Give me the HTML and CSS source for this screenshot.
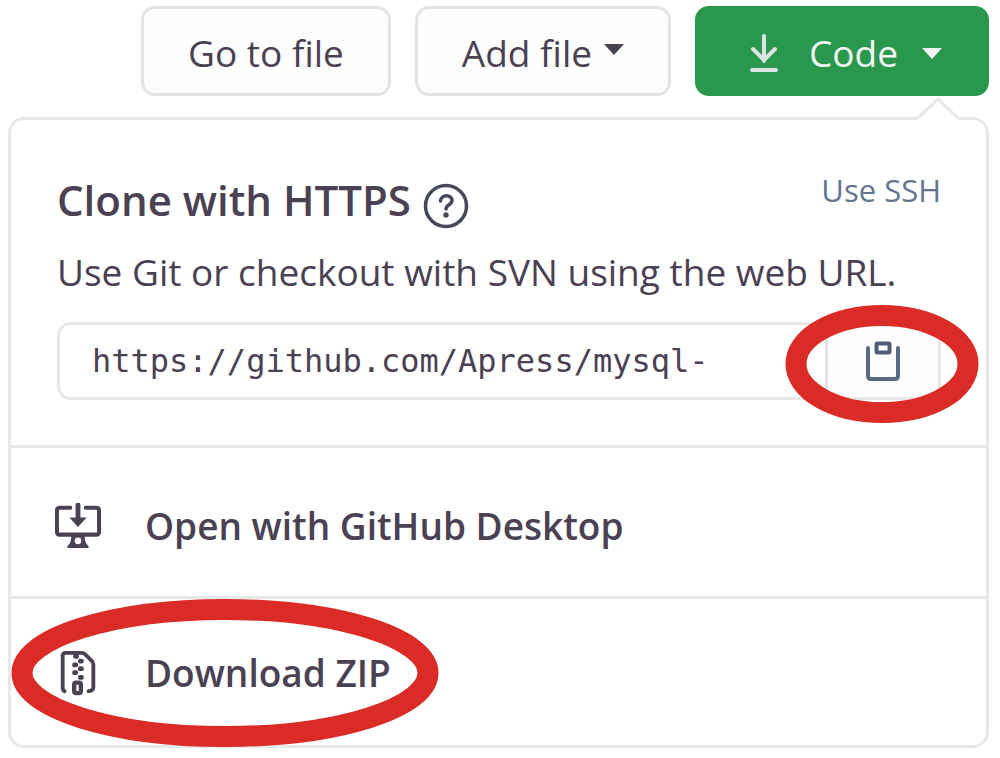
FILE: index.html
```html
<!DOCTYPE html>
<html lang="en">
<head>
<meta charset="utf-8">
<title>Clone repository</title>
<link rel="stylesheet" href="styles.css">
</head>
<body>
<nav class="toolbar">
  <button class="btn" type="button">Go to file</button>
  <button class="btn" type="button">Add file
    <svg class="caret caret-raised" viewBox="0 0 20 11" aria-hidden="true"><path d="M0 0h20L10 11z"/></svg>
  </button>
  <button class="btn btn-primary" type="button" aria-expanded="true">
    <svg class="download-icon" viewBox="0 0 28 38" aria-hidden="true"><path d="M14 2v25M3 15l11 11 11-11M2 36h24"/></svg>
    Code
    <svg class="caret caret-spaced" viewBox="0 0 20 11" aria-hidden="true"><path d="M0 0h20L10 11z"/></svg>
  </button>
</nav>
<main class="panel">
  <svg class="panel-tip" viewBox="0 0 42 22" aria-hidden="true"><path d="M0 22L21 2l21 20z" fill="#fff"/><path d="M1 20L21 1l20 19" fill="none" stroke="#e7e8e8" stroke-width="3"/></svg>
  <section class="clone">
    <div class="clone-head">
      <h1 class="title">Clone with HTTPS</h1>
      <a class="help" href="#help" aria-label="Which remote URL should I use?">
        <svg viewBox="0 0 46 46" aria-hidden="true"><circle cx="23" cy="23" r="20.5" fill="none" stroke="#46485c" stroke-width="3.5"/><path d="M17.500 18c.5-7 11.500-7 11.500-.5 0 4.500-6 4-6 8.500" fill="none" stroke="#46485c" stroke-width="3.500" stroke-linecap="round"/><circle cx="23" cy="32" r="2.700" fill="#46485c"/></svg>
      </a>
      <a class="ssh" href="#ssh">Use SSH</a>
    </div>
    <p class="hint"><label for="url">Use Git or checkout with SVN using the web URL.</label></p>
    <div class="url-group">
      <input class="url" id="url" type="text" readonly value="https://github.com/Apress/mysql-">
      <button class="copy" type="button" aria-label="Copy URL">
        <svg class="copy-icon" viewBox="0 0 36 42" aria-hidden="true"><path d="M3 8v28q0 3 3 3h24q3 0 3-3V8" fill="none" stroke="#5c6b85" stroke-width="4" stroke-linecap="round"/><rect x="11.500" y="3.500" width="13" height="9" rx="1" fill="#fff" stroke="#535c78" stroke-width="4"/></svg>
        <svg class="mark mark-copy" viewBox="0 0 194 118" aria-hidden="true"><ellipse cx="97" cy="59" rx="86" ry="48.500"/></svg>
      </button>
    </div>
  </section>
  <a class="row" href="#desktop">
    <svg class="row-icon" viewBox="0 0 48 48" aria-hidden="true"><path d="M16 5H5q-3 0-3 3v22q0 3 3 3h38q3 0 3-3V8q0-3-3-3H32" fill="none" stroke="#4a4153" stroke-width="4.200" stroke-linecap="round"/><path d="M24 2v16" stroke="#4a4153" stroke-width="5" stroke-linecap="round"/><path d="M15 15h18l-9 10z" fill="#4a4153"/><path d="M17 34h14c0 6 1 8 4 11v2H13v-2c3-3 4-5 4-11z" fill="#4a4153"/><ellipse cx="24" cy="39.500" rx="3.500" ry="3.500" fill="#fff"/></svg>
    Open with GitHub Desktop
  </a>
  <a class="row row-last" href="#zip">
    <svg class="row-icon" viewBox="0 0 48 48" aria-hidden="true"><path d="M10 43q-2-1-2-4V6q0-3 3-3h17q2 0 3.500 1.500L38 11q2 1.500 2 4v24q0 3-5 4" fill="none" stroke="#4a4153" stroke-width="4" stroke-linecap="round"/><g fill="#4a4153"><rect x="19" y="4" width="6" height="5" rx="2"/><rect x="24" y="9" width="6" height="5" rx="2"/><rect x="18" y="13" width="6" height="5" rx="2"/><rect x="24" y="17" width="6" height="5" rx="2"/><rect x="18" y="21" width="6" height="5" rx="2"/><rect x="24" y="26" width="6" height="5" rx="2"/></g><rect x="20" y="34" width="7" height="11" rx="2" fill="#fff" stroke="#4a4153" stroke-width="4.500"/></svg>
    Download ZIP
    <svg class="mark mark-zip" viewBox="0 0 428 148" aria-hidden="true"><ellipse cx="214" cy="74" rx="203" ry="63.500"/></svg>
  </a>
</main>
</body>
</html>
```
FILE: styles.css
```css
* { box-sizing: border-box; }

body {
  margin: 0;
  padding: 6px 11px 8px 8px;
  background: #fff;
  color: #4a4153;
  font: 37px/48px "Open Sans", "Noto Sans", sans-serif;
}

a { color: inherit; text-decoration: none; }
svg { display: block; flex: none; }
button, input { font: inherit; color: inherit; }

.toolbar {
  display: flex;
  justify-content: flex-end;
  gap: 24px;
}

.btn {
  display: flex;
  align-items: center;
  padding: 20px 44px 16px;
  border: 3px solid #e2e5e6;
  border-radius: 14px;
  background: #fdfdfd;
  white-space: nowrap;
}

.btn-primary {
  padding-left: 52px;
  border-color: #29984c;
  background: #29984c;
  color: #f4f5f5;
}

.caret { width: 20px; height: 11px; fill: currentColor; }
.caret-raised { margin: 0 0 8px 12px; }
.caret-spaced { margin-left: 24px; }

.download-icon {
  width: 28px;
  height: 38px;
  margin-right: 31px;
  fill: none;
  stroke: #dde2e5;
  stroke-width: 4;
  stroke-linecap: round;
  stroke-linejoin: round;
}

.panel {
  position: relative;
  margin-top: 21px;
  border: 3px solid #e7e8e8;
  border-radius: 16px;
}

.panel-tip {
  position: absolute;
  top: -22px;
  right: 27px;
  width: 42px;
  height: 22px;
}

.clone { padding: 46px 45px 45px 46px; }

.clone-head { display: flex; align-items: center; }

.title {
  margin: 0 0 4px;
  font-size: 42px;
  font-weight: 600;
}

.help { margin: 8px 0 0 12px; }
.help svg { width: 46px; height: 46px; }

.ssh {
  margin: 0 0 24px auto;
  color: #65758e;
  font-size: 31px;
}

.hint { margin: 10px 0 26px; white-space: nowrap; }

.url-group {
  display: flex;
  height: 78px;
  border: 3px solid #e7e8e8;
  border-radius: 14px;
}

.url {
  flex: 1;
  min-width: 0;
  padding: 0 32px;
  border: 0;
  border-radius: 12px;
  background: #fff;
  font: 32px "DejaVu Sans Mono", monospace;
}

.copy {
  position: relative;
  display: grid;
  place-items: center;
  width: 113px;
  padding: 0;
  border: 0;
  border-left: 3px solid #e2e5e6;
  border-radius: 0 12px 12px 0;
  background: #fdfdfd;
}

.copy-icon { width: 36px; height: 42px; }

.row {
  position: relative;
  display: flex;
  align-items: center;
  gap: 44px;
  padding: 54px 44px 46px;
  border-top: 3px solid #e7e8e8;
  font-weight: 600;
}

.row-last { padding: 50px 44px 48px; }

.row-icon { width: 46px; height: 46px; }

/* Highlight rings over the two actions */
.mark {
  position: absolute;
  fill: none;
  stroke: #da2b26;
  stroke-width: 21;
}

.mark-copy { top: -20px; left: -43px; width: 194px; height: 118px; }
.mark-zip { top: 0; left: 0; width: 428px; height: 148px; }
```
